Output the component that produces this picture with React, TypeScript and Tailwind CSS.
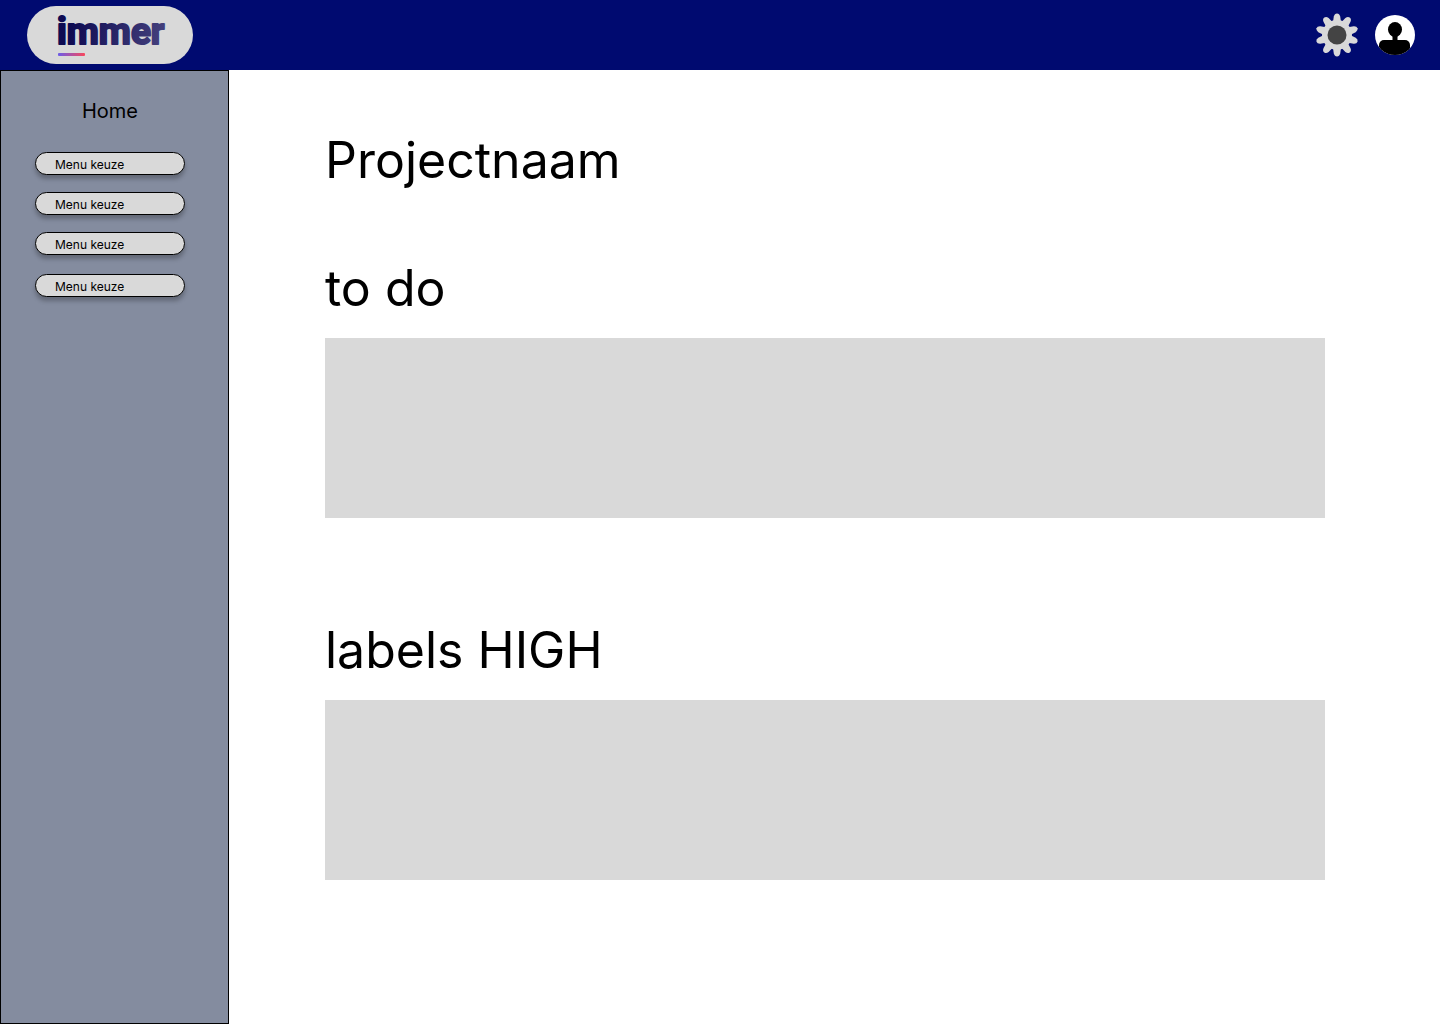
const menuItems = ['Menu keuze', 'Menu keuze', 'Menu keuze', 'Menu keuze'];

const sections = [
  { id: 'todo', title: 'to do' },
  { id: 'labels', title: 'labels HIGH' },
];

const gearAngles = [0, 36, 72, 108, 144, 180, 216, 252, 288, 324];

function Logo() {
  return (
    <svg width="120" height="52" viewBox="0 0 120 52" role="img" aria-label="immer">
      <defs>
        <linearGradient id="word" gradientUnits="userSpaceOnUse" x1="20" y1="0" x2="112" y2="20">
          <stop offset="0" stopColor="#0e0b52" />
          <stop offset="1" stopColor="#45417d" />
        </linearGradient>
        <linearGradient id="line" x1="0" y1="0" x2="1" y2="0">
          <stop offset="0" stopColor="#6b5ce8" />
          <stop offset="1" stopColor="#f9485c" />
        </linearGradient>
      </defs>
      <text
        x="2"
        y="35"
        fontFamily="Roboto, sans-serif"
        fontSize="37"
        fontWeight="700"
        fill="url(#word)"
        stroke="url(#word)"
        strokeWidth="2"
        strokeLinejoin="round"
      >
        immer
      </text>
      <rect x="3" y="44" width="27" height="3" rx="1" fill="url(#line)" />
    </svg>
  );
}

function GearIcon() {
  return (
    <svg width="44" height="44" viewBox="0 0 44 44" aria-hidden="true">
      <circle cx="22" cy="22" r="15" fill="#d9d9d9" />
      {gearAngles.map((angle) => (
        <path
          key={angle}
          d="M18 9 L18.8 3.4 Q19.6 0.4 22 0.4 Q24.4 0.4 25.2 3.4 L26 9 Z"
          fill="#d9d9d9"
          transform={`rotate(${angle} 22 22)`}
        />
      ))}
      <circle cx="22" cy="22" r="9.5" fill="#444444" />
    </svg>
  );
}

function AvatarIcon() {
  return (
    <svg width="40" height="40" viewBox="0 0 40 40" aria-hidden="true">
      <defs>
        <clipPath id="avatar">
          <circle cx="20" cy="20" r="20" />
        </clipPath>
      </defs>
      <circle cx="20" cy="20" r="20" fill="#ffffff" />
      <g clipPath="url(#avatar)">
        <ellipse cx="20" cy="14.5" rx="7" ry="7.5" />
        <rect x="17.5" y="19" width="5" height="8" />
        <rect x="4" y="25" width="31" height="20" rx="5" />
      </g>
    </svg>
  );
}

export default function App() {
  return (
    <div className="flex min-h-screen flex-col bg-white font-['Inter',sans-serif] text-black">
      <header className="flex h-[70px] items-center justify-between bg-[#000a70] pr-[25px] pl-[27px]">
        <a href="#" className="flex h-[58px] w-[166px] items-center rounded-full bg-[#d9d9d9] pl-7">
          <Logo />
        </a>
        <div className="flex items-center gap-4">
          <button type="button" aria-label="Instellingen">
            <GearIcon />
          </button>
          <button type="button" aria-label="Profiel">
            <AvatarIcon />
          </button>
        </div>
      </header>

      <div className="flex grow">
        <nav className="w-[229px] shrink-0 border border-black bg-[#848c9f] pt-7 pr-[43px] pl-[34px]">
          <a href="#" className="block text-center text-xl leading-6">
            Home
          </a>
          <ul className="mt-[29px] flex flex-col gap-[17px]">
            {menuItems.map((item, i) => (
              <li key={i} className="last:mt-0.5">
                <button
                  type="button"
                  className="block h-[23px] w-full rounded-full border border-black bg-[#d9d9d9] pt-0.5 pl-[19px] text-left text-xs shadow-[0_4px_4px_rgba(0,0,0,0.25)]"
                >
                  {item}
                </button>
              </li>
            ))}
          </ul>
        </nav>

        <main className="grow pt-[60px] pr-[115px] pl-24">
          <h1 className="mb-[68px] text-[50px] leading-[60px]">Projectnaam</h1>
          {sections.map((section) => (
            <section key={section.id} aria-labelledby={section.id} className="mb-[102px]">
              <h2 id={section.id} className="mb-5 text-[50px] leading-[60px]">
                {section.title}
              </h2>
              <div className="h-[180px] bg-[#d9d9d9]" />
            </section>
          ))}
        </main>
      </div>
    </div>
  );
}
